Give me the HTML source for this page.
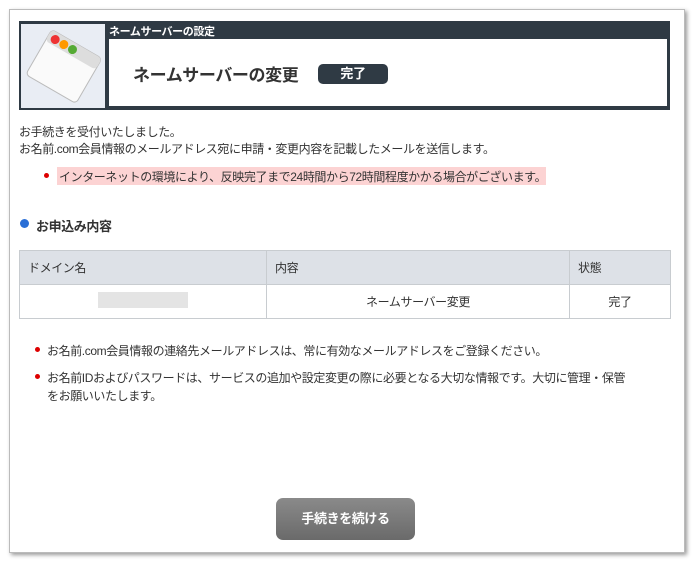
<!DOCTYPE html>
<html><head><meta charset="utf-8"><style>
*{margin:0;padding:0;box-sizing:border-box}
body{width:693px;height:562px;background:#fff;font-family:"Liberation Sans","Noto Sans CJK JP",sans-serif;color:#333;font-size:12px;position:relative;overflow:hidden;letter-spacing:-0.4px}
.frame{position:absolute;left:9px;top:9px;width:676px;height:544px;border:1px solid #bbb;box-shadow:2px 2px 4px #999;background:#fff}
.hdr{position:absolute;left:19px;top:21px;width:651px;height:89px;background:#2f3a44}
.icon{position:absolute;left:2px;top:3px;width:84px;height:84px;background:#e9edf4}
.cap{position:absolute;left:90px;top:2px;color:#fff;font-weight:bold;font-size:11px}
.inner{position:absolute;left:90px;top:18px;width:558px;height:67px;background:#fff}
.title{position:absolute;left:24px;top:22px;font-size:17px;font-weight:bold;color:#333}
.badge{position:absolute;left:209px;top:25px;width:70px;height:20px;border-radius:5px;background:#2f3a44;color:#fff;font-weight:bold;font-size:13px;text-align:center;line-height:20px}
.t{position:absolute;left:19px;font-size:12px;white-space:nowrap}
.pink{position:absolute;left:57px;top:167px;width:489px;height:18px;background:#fcd3d3}
.dot{position:absolute;width:5px;height:5px;border-radius:50%;background:#d00}
table{position:absolute;left:19px;top:250px;width:652px;border-collapse:collapse}
td,th{border:1px solid #c8ccd0;font-size:12px;font-weight:normal;height:34px}
th{background:#dde1e7;text-align:left;padding-left:8px}
.btn{position:absolute;left:276px;top:498px;width:139px;height:42px;border-radius:7px;background:linear-gradient(#8a8a8a,#6a6a6a);color:#fff;font-weight:bold;font-size:13px;text-align:center;line-height:42px}
</style></head><body>
<div class="frame"></div>
<div class="hdr">
 <div class="icon"><svg width="84" height="84"><g transform="rotate(30 42 42)"><rect x="14" y="16" width="58" height="52" rx="4" fill="#fafafa" stroke="#bbb"/><rect x="14" y="16" width="58" height="13" rx="4" fill="#ddd"/><circle cx="22" cy="23" r="4.5" fill="#e33"/><circle cx="32" cy="23" r="4.5" fill="#f90"/><circle cx="42" cy="23" r="4.5" fill="#5a3"/></g></svg></div>
 <div class="cap">ネームサーバーの設定</div>
 <div class="inner"><div class="title">ネームサーバーの変更</div><div class="badge">完了</div></div>
</div>
<div class="t" style="top:123px">お手続きを受付いたしました。</div>
<div class="t" style="top:140px">お名前.com会員情報のメールアドレス宛に申請・変更内容を記載したメールを送信します。</div>
<div class="pink"></div>
<div class="dot" style="left:44px;top:173px"></div>
<div class="t" style="left:59px;top:168px">インターネットの環境により、反映完了まで24時間から72時間程度かかる場合がございます。</div>
<div style="position:absolute;left:20px;top:219px;width:9px;height:9px;border-radius:50%;background:#2a6fd6"></div>
<div class="t" style="left:36px;top:216px;font-size:13px;font-weight:bold">お申込み内容</div>
<table><tr><th style="width:247px">ドメイン名</th><th style="width:303px">内容</th><th>状態</th></tr>
<tr><td style="text-align:center"><span style="display:inline-block;width:90px;height:16px;background:#e4e4e4"></span></td><td style="text-align:center">ネームサーバー変更</td><td style="text-align:center">完了</td></tr></table>
<div class="dot" style="left:35px;top:347px"></div>
<div class="t" style="left:47px;top:342px">お名前.com会員情報の連絡先メールアドレスは、常に有効なメールアドレスをご登録ください。</div>
<div class="dot" style="left:35px;top:374px"></div>
<div class="t" style="left:47px;top:369px">お名前IDおよびパスワードは、サービスの追加や設定変更の際に必要となる大切な情報です。大切に管理・保管</div>
<div class="t" style="left:47px;top:387px">をお願いいたします。</div>
<div class="btn">手続きを続ける</div>
</body></html>
